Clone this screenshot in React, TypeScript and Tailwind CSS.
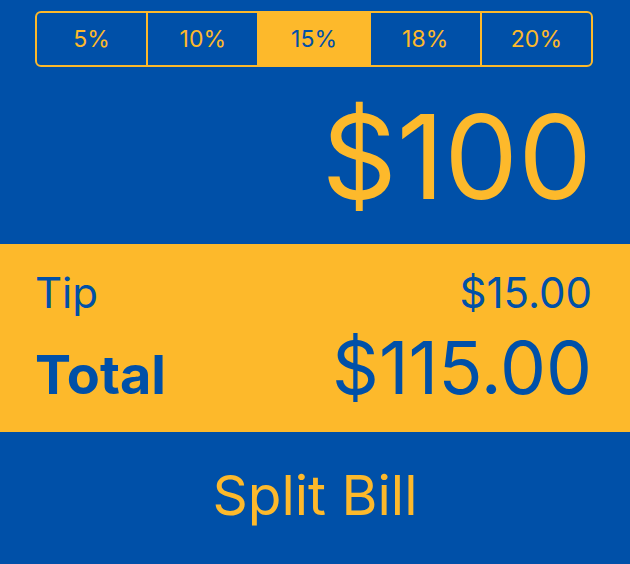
import React, { useState } from "react";

const tips = [5, 10, 15, 18, 20];

const App = () => {
    const [selected, setSelected] = useState(15);
    const bill = 100;
    const tip = (bill * selected) / 100;

    return (
        <div className="w-[630px] h-[564px] bg-[#0050A8] flex flex-col font-['Inter',sans-serif] text-[#FDB92B]">
            <div className="pl-[35px] pr-[37px] pt-[11px]">
                <div className="flex h-[56px] border-2 border-[#FDB92B] rounded-[6px] overflow-hidden">
                    {tips.map((t, i) => (
                        <button
                            key={t}
                            onClick={() => setSelected(t)}
                            className={
                                "flex-1 flex items-center justify-center text-[23px] " +
                                (i > 0 ? "border-l-2 border-[#FDB92B] " : "") +
                                (t === selected ? "bg-[#FDB92B] text-[#0050A8]" : "text-[#FDB92B]")
                            }
                        >
                            {t}%
                        </button>
                    ))}
                </div>
            </div>

            <div className="flex-1 flex items-center justify-end pr-[38px] pt-[2px]">
                <span className="text-[117px] leading-none">${bill}</span>
            </div>

            <div className="h-[188px] bg-[#FDB92B] text-[#0050A8] pl-[35px] pr-[38px] flex flex-col justify-center gap-[17px]">
                <div className="flex items-baseline justify-between">
                    <span className="text-[42px] leading-none">Tip</span>
                    <span className="text-[42px] leading-none">${tip.toFixed(2)}</span>
                </div>
                <div className="flex items-baseline justify-between">
                    <span className="text-[54px] leading-none font-bold">Total</span>
                    <span className="text-[73px] leading-none">${(bill + tip).toFixed(2)}</span>
                </div>
            </div>

            <div className="h-[132px] flex items-center justify-center pb-[6px]">
                <span className="text-[55px] leading-none">Split Bill</span>
            </div>
        </div>
    );
};

export default App;
